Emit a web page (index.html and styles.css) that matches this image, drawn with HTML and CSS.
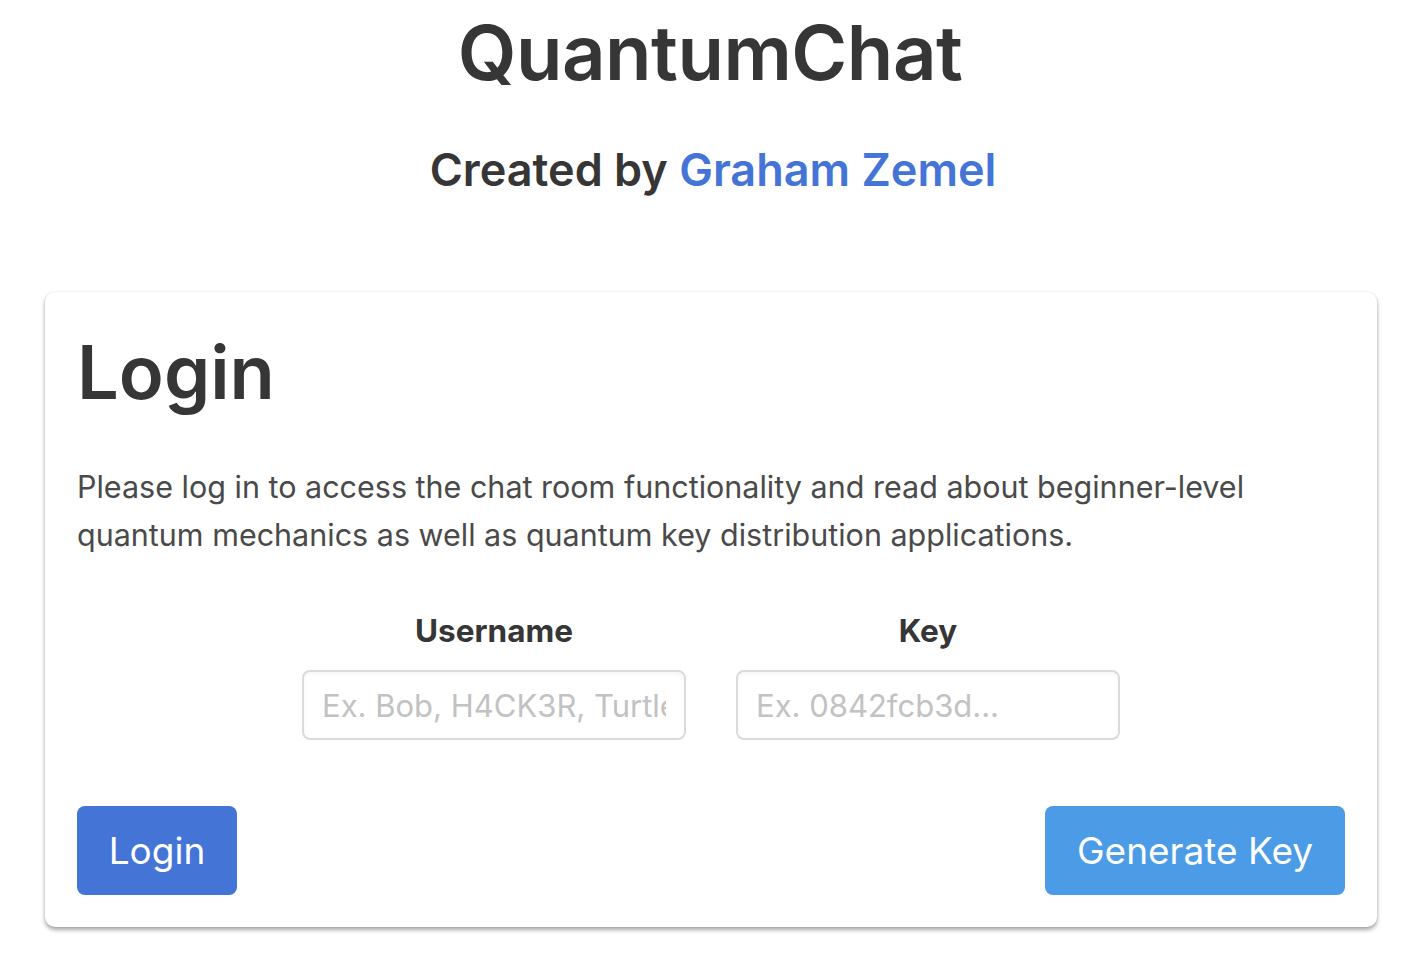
FILE: index.html
```html
<!DOCTYPE html>
<html lang="en">
<head>
<meta charset="utf-8">
<title>QuantumChat</title>
<link rel="stylesheet" href="styles.css">
</head>
<body>
<header class="hero">
  <h1 class="title">QuantumChat</h1>
  <h2 class="subtitle">Created by <a class="author" href="#">Graham Zemel</a></h2>
</header>
<main class="card">
  <h1 class="card-title">Login</h1>
  <p class="intro">Please log in to access the chat room functionality and read about beginner-level quantum mechanics as well as quantum key distribution applications.</p>
  <div class="fields">
    <div class="field">
      <label class="label" for="user">Username</label>
      <input class="input" id="user" type="text" placeholder="Ex. Bob, H4CK3R, Turtle...">
    </div>
    <div class="field">
      <label class="label" for="key">Key</label>
      <input class="input" id="key" type="text" placeholder="Ex. 0842fcb3d...">
    </div>
  </div>
  <div class="actions">
    <button class="btn btn-login">Login</button>
    <button class="btn btn-generate">Generate Key</button>
  </div>
</main>
</body>
</html>
```

FILE: styles.css
```css
* { box-sizing: border-box; }
html, body { margin: 0; padding: 0; background: #fff; }
body {
  font-family: Inter, "Noto Sans", sans-serif;
  color: #363636;
  width: 1426px;
  height: 968px;
  overflow: hidden;
}
.hero {
  display: flex;
  flex-direction: column;
  align-items: center;
}
.title {
  margin: 0 0 0 -6px;
  padding-top: 2px;
  font-size: 76px;
  line-height: 100px;
  font-weight: 600;
  color: #363636;
  letter-spacing: -0.5px;
}
.subtitle {
  margin: 36px 0 0;
  font-size: 45px;
  line-height: 64px;
  font-weight: 600;
  color: #363636;
}
.author { color: #4374d6; text-decoration: none; }
.card {
  margin: 90px 49px 0 45px;
  background: #fff;
  border-radius: 10px;
  box-shadow: 0 3px 4px rgba(10,10,10,0.35), 0 0 0 1px rgba(10,10,10,0.03);
  padding: 32px 32px 32px 32px;
}
.card-title {
  margin: 0;
  font-size: 74px;
  line-height: 96px;
  font-weight: 600;
  color: #363636;
}
.intro {
  margin: 43px 0 0;
  font-size: 30.5px;
  line-height: 48px;
  color: #4a4a4a;
}
.fields {
  display: flex;
  justify-content: center;
  gap: 50px;
  margin-top: 50px;
}
.field {
  display: flex;
  flex-direction: column;
  align-items: center;
  width: 384px;
}
.label {
  font-size: 31.5px;
  line-height: 44px;
  font-weight: 700;
  color: #363636;
  margin-bottom: 17px;
}
.input {
  width: 384px;
  height: 70px;
  border: 2px solid #dbdbdb;
  border-radius: 8px;
  padding: 0 18px;
  font-family: inherit;
  font-size: 31px;
  color: #363636;
  background: #fff;
  outline: none;
  box-shadow: inset 0 2px 4px rgba(10,10,10,0.04);
}
.input::placeholder { color: #c2c2c2; }
.actions {
  display: flex;
  justify-content: space-between;
  margin-top: 66px;
}
.btn {
  height: 89px;
  border: none;
  border-radius: 8px;
  color: #fff;
  font-family: inherit;
  font-size: 37px;
  font-weight: 400;
  padding: 0;
  white-space: nowrap;
  cursor: pointer;
}
.btn-login { background: #4474d6; width: 160px; }
.btn-generate { background: #4b9be6; width: 300px; }
```
